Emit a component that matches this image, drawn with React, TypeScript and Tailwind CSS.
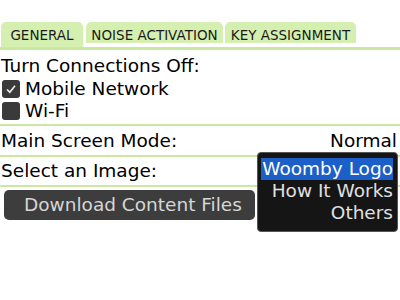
import React from 'react'

const tabs = [
  { label: 'GENERAL', active: true, w: 'w-[82px]' },
  { label: 'NOISE ACTIVATION', active: false, w: 'w-[137px]' },
  { label: 'KEY ASSIGNMENT', active: false, w: 'w-[131px]' },
]

const Checkbox: React.FC<{ checked: boolean }> = ({ checked }) => (
  <div className="w-[18px] h-[18px] rounded-[3px] bg-[#3a3a3a] flex items-center justify-center">
    {checked && (
      <svg width="14" height="14" viewBox="0 0 14 14">
        <path d="M3 7.5 L5.8 10.2 L11 3.8" stroke="#f0f0f0" strokeWidth="1.6" fill="none" />
      </svg>
    )}
  </div>
)

export default function App() {
  return (
    <div
      className="relative w-[400px] h-[300px] bg-white text-black overflow-hidden text-[18.5px]"
      style={{ fontFamily: '"DejaVu Sans", sans-serif' }}
    >
      <div className="pt-[22px] pl-[1px] flex items-start gap-[2px] h-[47px]">
        {tabs.map((t) => (
          <div
            key={t.label}
            className={`${t.w} ${t.active ? 'h-[25px] mr-[1px]' : 'h-[21px]'} bg-[#d5efb0] rounded-t-[5px] flex items-start justify-center pt-[5px] text-[13.5px] leading-[16px] text-[#1a1a1a]`}
          >
            {t.label}
          </div>
        ))}
      </div>
      <div className="h-[3px] bg-[#cbe8a0]" />

      <div className="leading-[24px] pt-[4px] pl-[1px]">Turn Connections Off:</div>
      <div className="flex items-center gap-[5px] pl-[2px] h-[22px]">
        <Checkbox checked />
        <span>Mobile Network</span>
      </div>
      <div className="flex items-center gap-[5px] pl-[2px] h-[22px]">
        <Checkbox checked={false} />
        <span>Wi-Fi</span>
      </div>

      <div className="mt-[2px] h-[2px] bg-[#cbe8a0]" />
      <div className="flex justify-between items-center h-[29px] px-[1px]">
        <span>Main Screen Mode:</span>
        <span className="pr-[2px]">Normal</span>
      </div>
      <div className="h-[2px] bg-[#cbe8a0]" />
      <div className="flex items-center h-[28px] px-[1px]">
        <span>Select an Image:</span>
      </div>
      <div className="h-[2px] bg-[#cbe8a0]" />

      <div className="pt-[3px] pl-[4px]">
        <div className="w-[251px] h-[30px] rounded-[5px] bg-[#3d3d3d] text-[#d6d6d6] flex items-center pl-[20px] whitespace-nowrap">
          Download Content Files
        </div>
      </div>

      <div className="absolute left-[257px] top-[152px] w-[141px] h-[80px] rounded-[4px] bg-[#151515] border border-[#555] flex flex-col items-end pr-[4px] pt-[5px] leading-[22px] text-[#e0e0e0] whitespace-nowrap">
        <div className="bg-[#1c5fc9] text-white w-[132px] flex justify-end">Woomby Logo</div>
        <div>How It Works</div>
        <div>Others</div>
      </div>
    </div>
  )
}
